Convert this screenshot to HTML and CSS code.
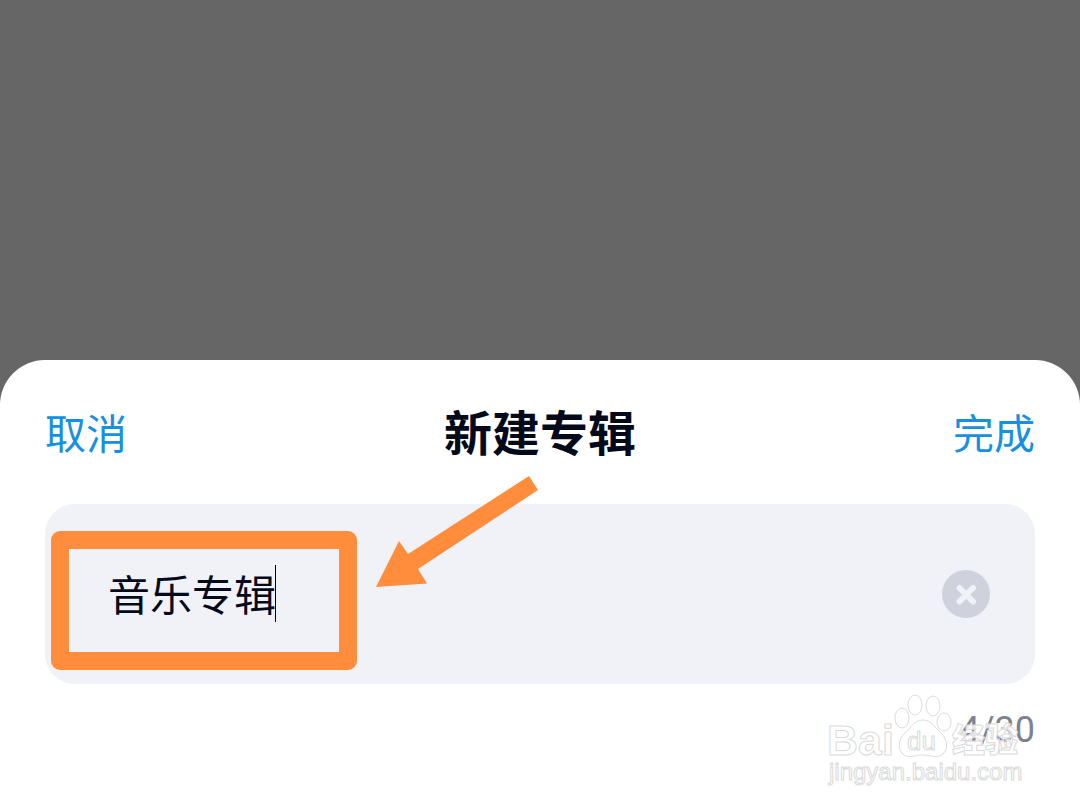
FILE: index.html
```html
<!DOCTYPE html>
<html lang="zh-CN">
<head>
  <meta charset="UTF-8">
  <meta name="viewport" content="width=device-width, initial-scale=1.0">
  <title>新建专辑</title>
  <link rel="stylesheet" href="styles.css">
</head>
<body>

<form class="sheet">
  <header class="sheet-header">
    <button type="button" class="link-btn">取消</button>
    <h1>新建专辑</h1>
    <button type="submit" class="link-btn link-btn-right">完成</button>
  </header>

  <div class="field">
    <input type="text" class="name-input" name="album_name" aria-label="专辑名称" maxlength="30" value="音乐专辑">
    <span class="caret"></span>
    <button type="button" class="clear-btn" aria-label="清除">
      <svg width="48" height="48" viewBox="0 0 48 48">
        <circle cx="24" cy="24" r="24" fill="#cfd1dc"/>
        <path d="M17.5 18L31 31.5M31 18L17.5 31.5" stroke="#f1f2f8" stroke-width="6" stroke-linecap="round"/>
      </svg>
    </button>

    <div class="highlight"></div>
    <svg class="arrow" width="170" height="120" viewBox="0 0 170 120">
      <path d="M159 6L168 20L48 99L57 113.5L6 117L29 71L38 84Z" fill="#ff8d3b"/>
    </svg>
  </div>

  <div class="counter">4/30</div>

  <svg class="watermark" width="210" height="110" viewBox="0 0 210 110">
    <g class="mark-shapes">
      <ellipse cx="82" cy="33" rx="7" ry="10"/>
      <ellipse cx="95" cy="20" rx="7" ry="10"/>
      <ellipse cx="113" cy="21" rx="7" ry="10"/>
      <ellipse cx="124" cy="37" rx="7" ry="9"/>
      <path d="M103 35C94 35 91 43 85 48C78 54 77 65 84 70C91 74 96 69 103 70C110 70 117 74 123 69C129 63 127 54 121 48C115 43 112 35 103 35Z"/>
    </g>
    <g class="mark-text">
      <text x="7" y="70" class="mark-brand">Bai</text>
      <text x="87" y="65" class="mark-du">du</text>
      <text x="132" y="67" class="mark-cn">经验</text>
      <text x="9" y="95" class="mark-url">jingyan.baidu.com</text>
    </g>
  </svg>
</form>

</body>
</html>
```

FILE: styles.css
```css
* {
  box-sizing: border-box;
}

body {
  margin: 0;
  min-height: 100vh;
  display: flex;
  flex-direction: column;
  justify-content: flex-end;
  background-color: #666666;
  font-family: Roboto, "Noto Sans CJK SC", sans-serif;
  color: #040a1a;
}

button {
  padding: 0;
  border: none;
  background: none;
  font-family: inherit;
}

.sheet {
  position: relative;
  min-height: 450px;
  padding: 41px 45px 0;
  background-color: #ffffff;
  border-radius: 45px 45px 0 0;
}

.sheet-header {
  display: grid;
  grid-template-columns: 1fr auto 1fr;
  align-items: center;
  height: 68px;
  margin-bottom: 35px;
}

h1 {
  margin: 0;
  font-size: 48px;
  line-height: 68px;
  font-weight: bold;
}

.link-btn {
  justify-self: start;
  font-size: 41px;
  line-height: 60px;
  color: #1590e2;
}

.link-btn-right {
  justify-self: end;
}

.field {
  position: relative;
  display: flex;
  align-items: center;
  height: 180px;
  padding: 0 45px 0 63px;
  background-color: #f1f2f8;
  border-radius: 30px;
}

.name-input {
  flex: 1;
  min-width: 0;
  padding: 6px 0 0;
  border: none;
  outline: none;
  background: none;
  font-family: inherit;
  font-size: 42px;
  line-height: 60px;
  color: inherit;
}

.caret {
  position: absolute;
  left: 230px;
  top: 61px;
  width: 1px;
  height: 57px;
  background-color: #000000;
}

.clear-btn {
  width: 48px;
  height: 48px;
}

.clear-btn svg {
  display: block;
}

.highlight {
  position: absolute;
  left: 6px;
  top: 27px;
  width: 306px;
  height: 139px;
  border: 18px solid #ff8d3b;
  border-radius: 9px;
  pointer-events: none;
}

.arrow {
  position: absolute;
  left: 325px;
  top: -34px;
  pointer-events: none;
}

.counter {
  margin-top: 25px;
  font-size: 36px;
  line-height: 42px;
  text-align: right;
  color: #7d828e;
}

.watermark {
  position: absolute;
  right: 50px;
  bottom: 15px;
  pointer-events: none;
}

.mark-shapes {
  fill: #ffffff;
  stroke: #dcdcdc;
  stroke-width: 1;
}

.mark-text {
  fill: #ffffff;
  fill-opacity: 0.8;
  stroke: #dadada;
  stroke-width: 1;
  font-family: "Liberation Sans", "Noto Sans CJK SC", sans-serif;
}

.mark-brand {
  font-size: 43px;
  font-weight: bold;
}

.mark-du {
  font-size: 26px;
}

.mark-cn {
  font-size: 33px;
  font-weight: 900;
}

.mark-url {
  font-size: 24px;
}
```
